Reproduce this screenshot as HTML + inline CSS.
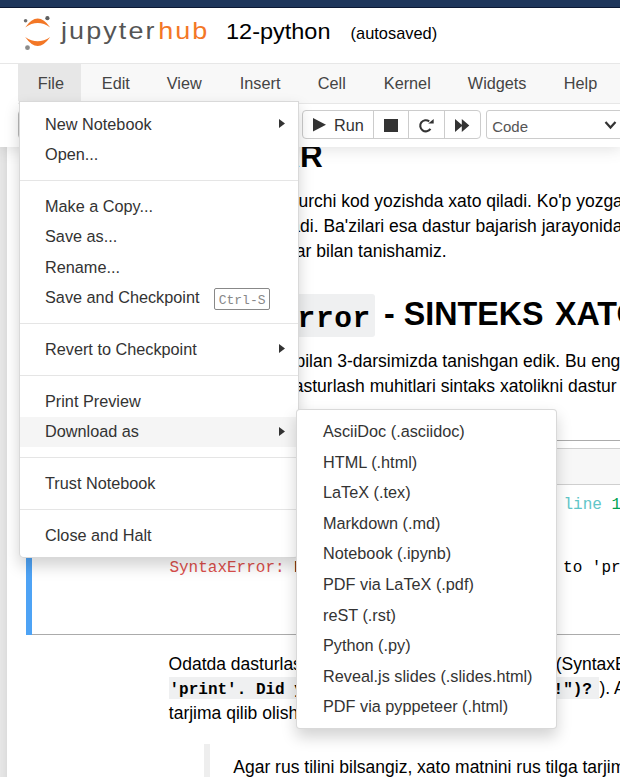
<!DOCTYPE html>
<html><head><meta charset="utf-8"><style>
html,body{margin:0;padding:0;}
body{width:620px;height:777px;overflow:hidden;position:relative;background:#fff;font-family:"Liberation Sans", sans-serif;}
.t{position:absolute;white-space:pre;}
.r{position:absolute;}
</style></head><body>
<div class="r" style="left:0px;top:147px;width:620px;height:630px;background:#eeeeee;"></div>
<div class="r" style="left:7px;top:120px;width:700px;height:700px;background:#fff;box-shadow:0 0 15px 1px rgba(87,87,87,0.2);"></div>
<div class="t" style="left:173.3px;top:138.38px;font-size:31.5px;line-height:37.8px;color:#000;font-weight:bold;font-family:'Liberation Sans', sans-serif;">XATOLAR</div>
<div class="t" style="left:262.5px;top:190.53px;font-size:17.5px;line-height:21.0px;color:#000;font-weight:normal;font-family:'Liberation Sans', sans-serif;">Dasturchi kod yozishda xato qiladi. Ko'p yozgan</div>
<div class="t" style="left:272.8px;top:215.73px;font-size:17.5px;line-height:21.0px;color:#000;font-weight:normal;font-family:'Liberation Sans', sans-serif;">qiladi. Ba'zilari esa dastur bajarish jarayonida</div>
<div class="t" style="left:258.9px;top:240.83px;font-size:17.5px;line-height:21.0px;color:#000;font-weight:normal;font-family:'Liberation Sans', sans-serif;">xatolar bilan tanishamiz.</div>
<div class="r" style="left:160px;top:294.2px;width:214.8px;height:42.6px;background:#eff0f1;border-radius:3px;"></div>
<div class="t" style="left:169.5px;top:302.05px;font-size:29.5px;line-height:35.4px;color:#000;font-weight:bold;font-family:'Liberation Mono', monospace;letter-spacing:0.6px;">SyntaxError</div>
<div class="t" style="left:384.3px;top:294.17px;font-size:33.2px;line-height:39.84px;color:#000;font-weight:bold;font-family:'Liberation Sans', sans-serif;transform:scaleX(0.972);transform-origin:0 0;">- SINTEKS <span style="margin-left:2.5px">XATOLIK</span></div>
<div class="t" style="left:175.8px;top:351.03px;font-size:17.5px;line-height:21.0px;color:#000;font-weight:normal;font-family:'Liberation Sans', sans-serif;">Sintaks xatolar bilan 3-darsimizda tanishgan edik. Bu eng</div>
<div class="t" style="left:205.8px;top:376.23px;font-size:17.5px;line-height:21.0px;color:#000;font-weight:normal;font-family:'Liberation Sans', sans-serif;">Ko'pchilik dasturlash muhitlari sintaks xatolikni dastur</div>
<div class="r" style="left:26px;top:440px;width:700px;height:195px;border:1px solid #ababab;box-sizing:border-box;"></div>
<div class="r" style="left:26px;top:440px;width:6px;height:195px;background:#4ea3f5;"></div>
<div class="r" style="left:168px;top:448px;width:500px;height:37px;background:#f7f7f7;border:1px solid #cfcfcf;box-sizing:border-box;"></div>
<div class="t" style="left:563.5px;top:496.14px;font-size:16px;line-height:19.2px;color:#000;font-weight:normal;font-family:'Liberation Mono', monospace;"><span style="color:#60c6c8">line</span> <span style="color:#00a250">1</span></div>
<div class="t" style="left:169.4px;top:559.34px;font-size:16px;line-height:19.2px;color:#000;font-weight:normal;font-family:'Liberation Mono', monospace;"><span style="color:#dc4f4b">SyntaxError:</span> Missing parentheses in call to 'print'</div>
<div class="t" style="left:168.6px;top:653.63px;font-size:17.5px;line-height:21.0px;color:#000;font-weight:normal;font-family:'Liberation Sans', sans-serif;">Odatda dasturlash muhitlari xatolik haqida xabar</div>
<div class="t" style="left:555.7px;top:653.63px;font-size:17.5px;line-height:21.0px;color:#000;font-weight:normal;font-family:'Liberation Sans', sans-serif;">(SyntaxError</div>
<div class="r" style="left:169px;top:677.3px;width:430px;height:21.4px;background:#eff0f1;"></div>
<div class="t" style="left:169.5px;top:680.94px;font-size:16px;line-height:19.2px;color:#000;font-weight:bold;font-family:'Liberation Mono', monospace;">'print'. Did you mean print("Hello World!")?</div>
<div class="t" style="left:599.5px;top:678.03px;font-size:17.5px;line-height:21.0px;color:#000;font-weight:normal;font-family:'Liberation Sans', sans-serif;">). Agar</div>
<div class="t" style="left:168.8px;top:703.43px;font-size:17.5px;line-height:21.0px;color:#000;font-weight:normal;font-family:'Liberation Sans', sans-serif;">tarjima qilib olishingiz mumkin.</div>
<div class="r" style="left:204px;top:744px;width:6px;height:40px;background:#eeeeee;"></div>
<div class="t" style="left:233.3px;top:757.33px;font-size:17.5px;line-height:21.0px;color:#000;font-weight:normal;font-family:'Liberation Sans', sans-serif;">Agar rus tilini bilsangiz, xato matnini rus tilga tarjima</div>
<div class="r" style="left:0px;top:0px;width:620px;height:147px;background:#fff;box-shadow:0 0 15px 1px rgba(87,87,87,0.2);"></div>
<div class="r" style="left:0px;top:0px;width:620px;height:7px;background:#1f375c;"></div>
<div class="r" style="left:0px;top:7px;width:620px;height:1px;background:#0c1934;"></div>
<svg class="r" style="left:0;top:0" width="60" height="60" viewBox="0 0 60 60">
<path d="M25.2 27.4 Q37.7 9.8 50.2 27.4 Q37.7 18.6 25.2 27.4Z" fill="#f37726"/>
<path d="M25.2 36.9 Q37.7 54.9 50.2 36.9 Q37.7 45.7 25.2 36.9Z" fill="#f37726"/>
<circle cx="25.6" cy="20.7" r="1.8" fill="#6e6e6e"/>
<circle cx="47.4" cy="18.2" r="2.1" fill="#5f5f5f"/>
<circle cx="27.5" cy="47.7" r="2.4" fill="#8c8c8c"/>
</svg>
<div class="t" style="left:60.8px;top:15.91px;font-size:24.5px;line-height:29.4px;color:#000;font-weight:normal;font-family:'Liberation Sans', sans-serif;letter-spacing:1.9px;transform:scaleX(1.1);transform-origin:0 0;"><span style="color:#555">jupyter</span><span style="color:#f37726;margin-left:1.5px">hub</span></div>
<div class="t" style="left:226.3px;top:17.50px;font-size:22.6px;line-height:27.12px;color:#000;font-weight:normal;font-family:'Liberation Sans', sans-serif;transform:scaleX(1.04);transform-origin:0 0;">12-python</div>
<div class="t" style="left:350.6px;top:23.77px;font-size:16.4px;line-height:19.68px;color:#000;font-weight:normal;font-family:'Liberation Sans', sans-serif;">(autosaved)</div>
<div class="r" style="left:0px;top:63px;width:620px;height:1px;background:#e7e7e7;"></div>
<div class="r" style="left:18px;top:64px;width:610px;height:39px;background:#f8f8f8;border-bottom:1px solid #e7e7e7;"></div>
<div class="r" style="left:18px;top:64px;width:63px;height:37px;background:#e7e7e7;"></div>
<div class="t" style="left:37.8px;top:73.62px;font-size:16.25px;line-height:19.5px;color:#444;font-weight:normal;font-family:'Liberation Sans', sans-serif;">File</div>
<div class="t" style="left:101.8px;top:73.62px;font-size:16.25px;line-height:19.5px;color:#444;font-weight:normal;font-family:'Liberation Sans', sans-serif;">Edit</div>
<div class="t" style="left:166.8px;top:73.62px;font-size:16.25px;line-height:19.5px;color:#444;font-weight:normal;font-family:'Liberation Sans', sans-serif;">View</div>
<div class="t" style="left:239.8px;top:73.62px;font-size:16.25px;line-height:19.5px;color:#444;font-weight:normal;font-family:'Liberation Sans', sans-serif;">Insert</div>
<div class="t" style="left:317.8px;top:73.62px;font-size:16.25px;line-height:19.5px;color:#444;font-weight:normal;font-family:'Liberation Sans', sans-serif;">Cell</div>
<div class="t" style="left:383.8px;top:73.62px;font-size:16.25px;line-height:19.5px;color:#444;font-weight:normal;font-family:'Liberation Sans', sans-serif;">Kernel</div>
<div class="t" style="left:467.8px;top:73.62px;font-size:16.25px;line-height:19.5px;color:#444;font-weight:normal;font-family:'Liberation Sans', sans-serif;">Widgets</div>
<div class="t" style="left:563.8px;top:73.62px;font-size:16.25px;line-height:19.5px;color:#444;font-weight:normal;font-family:'Liberation Sans', sans-serif;">Help</div>
<div class="r" style="left:18px;top:110.3px;width:60px;height:29.2px;border:1px solid #bbb;border-radius:4px;box-sizing:border-box;"></div>
<div class="r" style="left:302px;top:110.3px;width:179px;height:29.2px;border:1px solid #ccc;border-radius:4px;box-sizing:border-box;background:#fff;"></div>
<div class="r" style="left:373px;top:110.3px;width:1px;height:29.2px;background:#ccc;"></div>
<div class="r" style="left:408px;top:110.3px;width:1px;height:29.2px;background:#ccc;"></div>
<div class="r" style="left:444px;top:110.3px;width:1px;height:29.2px;background:#ccc;"></div>
<svg class="r" style="left:313px;top:118px" width="14" height="14"><path d="M0 0 L13 6.8 L0 13.6Z" fill="#333"/></svg>
<div class="t" style="left:334px;top:116.22px;font-size:16.25px;line-height:19.5px;color:#333;font-weight:normal;font-family:'Liberation Sans', sans-serif;">Run</div>
<div class="r" style="left:384.2px;top:118.8px;width:13.8px;height:13px;background:#333;"></div>
<svg class="r" style="left:416px;top:115px" width="22" height="20" viewBox="0 0 22 20"><path d="M14.46 13.96 A5.6 5.6 0 1 1 13.2 6.3" fill="none" stroke="#333" stroke-width="2.1"/><path d="M17.7 4.1 L17.7 8.6 L12.2 8.6Z" fill="#333"/></svg>
<svg class="r" style="left:454.5px;top:118.6px" width="16" height="14"><path d="M0 0 L7.6 6.5 L0 13Z M6.8 0 L14.3 6.5 L6.8 13Z" fill="#333"/></svg>
<div class="r" style="left:486.3px;top:110.2px;width:200px;height:29.3px;border:1px solid #ccc;border-radius:3px;box-sizing:border-box;background:#fff;"></div>
<div class="t" style="left:492.2px;top:118.10px;font-size:15px;line-height:18.0px;color:#555;font-weight:normal;font-family:'Liberation Sans', sans-serif;">Code</div>
<svg class="r" style="left:604px;top:120px" width="14" height="11"><path d="M1.5 2 L6.5 7.5 L11.5 2" fill="none" stroke="#333" stroke-width="2.2"/></svg>
<div class="r" style="left:19px;top:101px;width:279.5px;height:457px;background:#fff;border:1px solid rgba(0,0,0,.15);border-radius:0 0 5px 5px;box-sizing:border-box;box-shadow:0 7.5px 15px rgba(0,0,0,.175);"></div>
<div class="t" style="left:45px;top:114.62px;font-size:16.25px;line-height:19.5px;color:#333;font-weight:normal;font-family:'Liberation Sans', sans-serif;">New Notebook</div>
<svg class="r" style="left:279px;top:118.80px" width="7" height="10"><path d="M0 0 L6 4.5 L0 9Z" fill="#333"/></svg>
<div class="t" style="left:45px;top:145.17px;font-size:16.25px;line-height:19.5px;color:#333;font-weight:normal;font-family:'Liberation Sans', sans-serif;">Open...</div>
<div class="r" style="left:20px;top:180px;width:277.5px;height:1px;background:#e5e5e5;"></div>
<div class="t" style="left:45px;top:196.82px;font-size:16.25px;line-height:19.5px;color:#333;font-weight:normal;font-family:'Liberation Sans', sans-serif;">Make a Copy...</div>
<div class="t" style="left:45px;top:227.37px;font-size:16.25px;line-height:19.5px;color:#333;font-weight:normal;font-family:'Liberation Sans', sans-serif;">Save as...</div>
<div class="t" style="left:45px;top:257.92px;font-size:16.25px;line-height:19.5px;color:#333;font-weight:normal;font-family:'Liberation Sans', sans-serif;">Rename...</div>
<div class="t" style="left:45px;top:288.47px;font-size:16.25px;line-height:19.5px;color:#333;font-weight:normal;font-family:'Liberation Sans', sans-serif;">Save and Checkpoint</div>
<div class="r" style="left:214px;top:288px;width:55.5px;height:21.5px;border:1px solid #888;border-radius:2px;box-sizing:border-box;"></div>
<div class="t" style="left:218.7px;top:292.64px;font-size:13px;line-height:15.6px;color:#888;font-weight:normal;font-family:'Liberation Mono', monospace;">Ctrl-S</div>
<div class="r" style="left:20px;top:323px;width:277.5px;height:1px;background:#e5e5e5;"></div>
<div class="t" style="left:45px;top:340.12px;font-size:16.25px;line-height:19.5px;color:#333;font-weight:normal;font-family:'Liberation Sans', sans-serif;">Revert to Checkpoint</div>
<svg class="r" style="left:279px;top:344.30px" width="7" height="10"><path d="M0 0 L6 4.5 L0 9Z" fill="#333"/></svg>
<div class="r" style="left:20px;top:375px;width:277.5px;height:1px;background:#e5e5e5;"></div>
<div class="t" style="left:45px;top:391.77px;font-size:16.25px;line-height:19.5px;color:#333;font-weight:normal;font-family:'Liberation Sans', sans-serif;">Print Preview</div>
<div class="r" style="left:20px;top:416.8000000000001px;width:277.5px;height:30.55px;background:#f5f5f5;"></div>
<div class="t" style="left:45px;top:422.32px;font-size:16.25px;line-height:19.5px;color:#333;font-weight:normal;font-family:'Liberation Sans', sans-serif;">Download as</div>
<svg class="r" style="left:279px;top:426.50px" width="7" height="10"><path d="M0 0 L6 4.5 L0 9Z" fill="#333"/></svg>
<div class="r" style="left:20px;top:457px;width:277.5px;height:1px;background:#e5e5e5;"></div>
<div class="t" style="left:45px;top:473.97px;font-size:16.25px;line-height:19.5px;color:#333;font-weight:normal;font-family:'Liberation Sans', sans-serif;">Trust Notebook</div>
<div class="r" style="left:20px;top:509px;width:277.5px;height:1px;background:#e5e5e5;"></div>
<div class="t" style="left:45px;top:525.62px;font-size:16.25px;line-height:19.5px;color:#333;font-weight:normal;font-family:'Liberation Sans', sans-serif;">Close and Halt</div>
<div class="r" style="left:296.2px;top:409px;width:261.1px;height:320px;background:#fff;border:1px solid rgba(0,0,0,.15);border-radius:4px;box-sizing:border-box;box-shadow:0 7.5px 15px rgba(0,0,0,.175);"></div>
<div class="t" style="left:323px;top:422.22px;font-size:16.25px;line-height:19.5px;color:#333;font-weight:normal;font-family:'Liberation Sans', sans-serif;">AsciiDoc (.asciidoc)</div>
<div class="t" style="left:323px;top:452.77px;font-size:16.25px;line-height:19.5px;color:#333;font-weight:normal;font-family:'Liberation Sans', sans-serif;">HTML (.html)</div>
<div class="t" style="left:323px;top:483.32px;font-size:16.25px;line-height:19.5px;color:#333;font-weight:normal;font-family:'Liberation Sans', sans-serif;">LaTeX (.tex)</div>
<div class="t" style="left:323px;top:513.87px;font-size:16.25px;line-height:19.5px;color:#333;font-weight:normal;font-family:'Liberation Sans', sans-serif;">Markdown (.md)</div>
<div class="t" style="left:323px;top:544.42px;font-size:16.25px;line-height:19.5px;color:#333;font-weight:normal;font-family:'Liberation Sans', sans-serif;">Notebook (.ipynb)</div>
<div class="t" style="left:323px;top:574.97px;font-size:16.25px;line-height:19.5px;color:#333;font-weight:normal;font-family:'Liberation Sans', sans-serif;">PDF via LaTeX (.pdf)</div>
<div class="t" style="left:323px;top:605.52px;font-size:16.25px;line-height:19.5px;color:#333;font-weight:normal;font-family:'Liberation Sans', sans-serif;">reST (.rst)</div>
<div class="t" style="left:323px;top:636.07px;font-size:16.25px;line-height:19.5px;color:#333;font-weight:normal;font-family:'Liberation Sans', sans-serif;">Python (.py)</div>
<div class="t" style="left:323px;top:666.62px;font-size:16.25px;line-height:19.5px;color:#333;font-weight:normal;font-family:'Liberation Sans', sans-serif;">Reveal.js slides (.slides.html)</div>
<div class="t" style="left:323px;top:697.17px;font-size:16.25px;line-height:19.5px;color:#333;font-weight:normal;font-family:'Liberation Sans', sans-serif;">PDF via pyppeteer (.html)</div>
</body></html>
